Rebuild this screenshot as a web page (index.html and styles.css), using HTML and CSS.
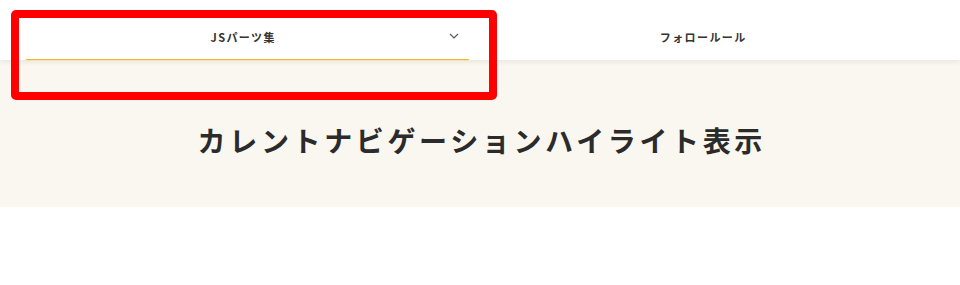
FILE: index.html
```html
<!DOCTYPE html>
<html lang="ja">
<head>
<meta charset="utf-8">
<link rel="stylesheet" href="styles.css">
</head>
<body>
<header class="site-header">
  <nav class="gnav">
    <div class="gnav-item is-current">
      <span class="gnav-label">JSパーツ集</span>
      <svg class="gnav-chevron" width="10" height="6" viewBox="0 0 10 6"><path d="M1 1 L5 5 L9 1" fill="none" stroke="#555" stroke-width="1.1"/></svg>
    </div>
    <div class="gnav-item">
      <span class="gnav-label">フォロールール</span>
    </div>
  </nav>
</header>
<section class="hero">
  <h1 class="hero-title">カレントナビゲーションハイライト表示</h1>
</section>
<div class="highlight-box"></div>
</body>
</html>
```
FILE: styles.css
```css
html, body {
  margin: 0;
  padding: 0;
  background: #fff;
  font-family: "Noto Sans CJK JP", "Noto Sans", sans-serif;
  color: #333;
}
body {
  width: 960px;
  height: 285px;
  position: relative;
  overflow: hidden;
}
.site-header {
  position: relative;
  z-index: 1;
  height: 60px;
  background: #fff;
  box-shadow: 0 2px 5px rgba(0, 0, 0, 0.07);
}
.gnav {
  display: grid;
  grid-template-columns: 443px 443px;
  column-gap: 12px;
  padding-left: 26px;
  height: 60px;
}
.gnav-item {
  position: relative;
  display: flex;
  align-items: center;
  justify-content: center;
  height: 60px;
  padding-top: 14px;
  box-sizing: border-box;
}
.gnav-item.is-current {
  border-bottom: 1px solid #f2b732;
  box-shadow: 0 1px 0 #f8e4b0;
}
.gnav-label {
  font-size: 11px;
  font-weight: 700;
  letter-spacing: 0.13em;
  color: #333;
  padding-left: 0.13em;
}
.is-current .gnav-label {
  margin-right: 10px;
}
.gnav-chevron {
  position: absolute;
  right: 10px;
  top: 33px;
}
.hero {
  height: 147px;
  padding-top: 12px;
  box-sizing: border-box;
  background: #faf7f0;
  display: flex;
  align-items: center;
  justify-content: center;
}
.hero-title {
  margin: 0;
  font-size: 28px;
  font-weight: 700;
  letter-spacing: 0.13em;
  color: #2b2b2b;
  padding-left: 0.13em;
}
.highlight-box {
  position: absolute;
  left: 11px;
  top: 10px;
  width: 486px;
  height: 90px;
  box-sizing: border-box;
  border: 8px solid #f00;
  border-radius: 5px;
  z-index: 2;
}
```
